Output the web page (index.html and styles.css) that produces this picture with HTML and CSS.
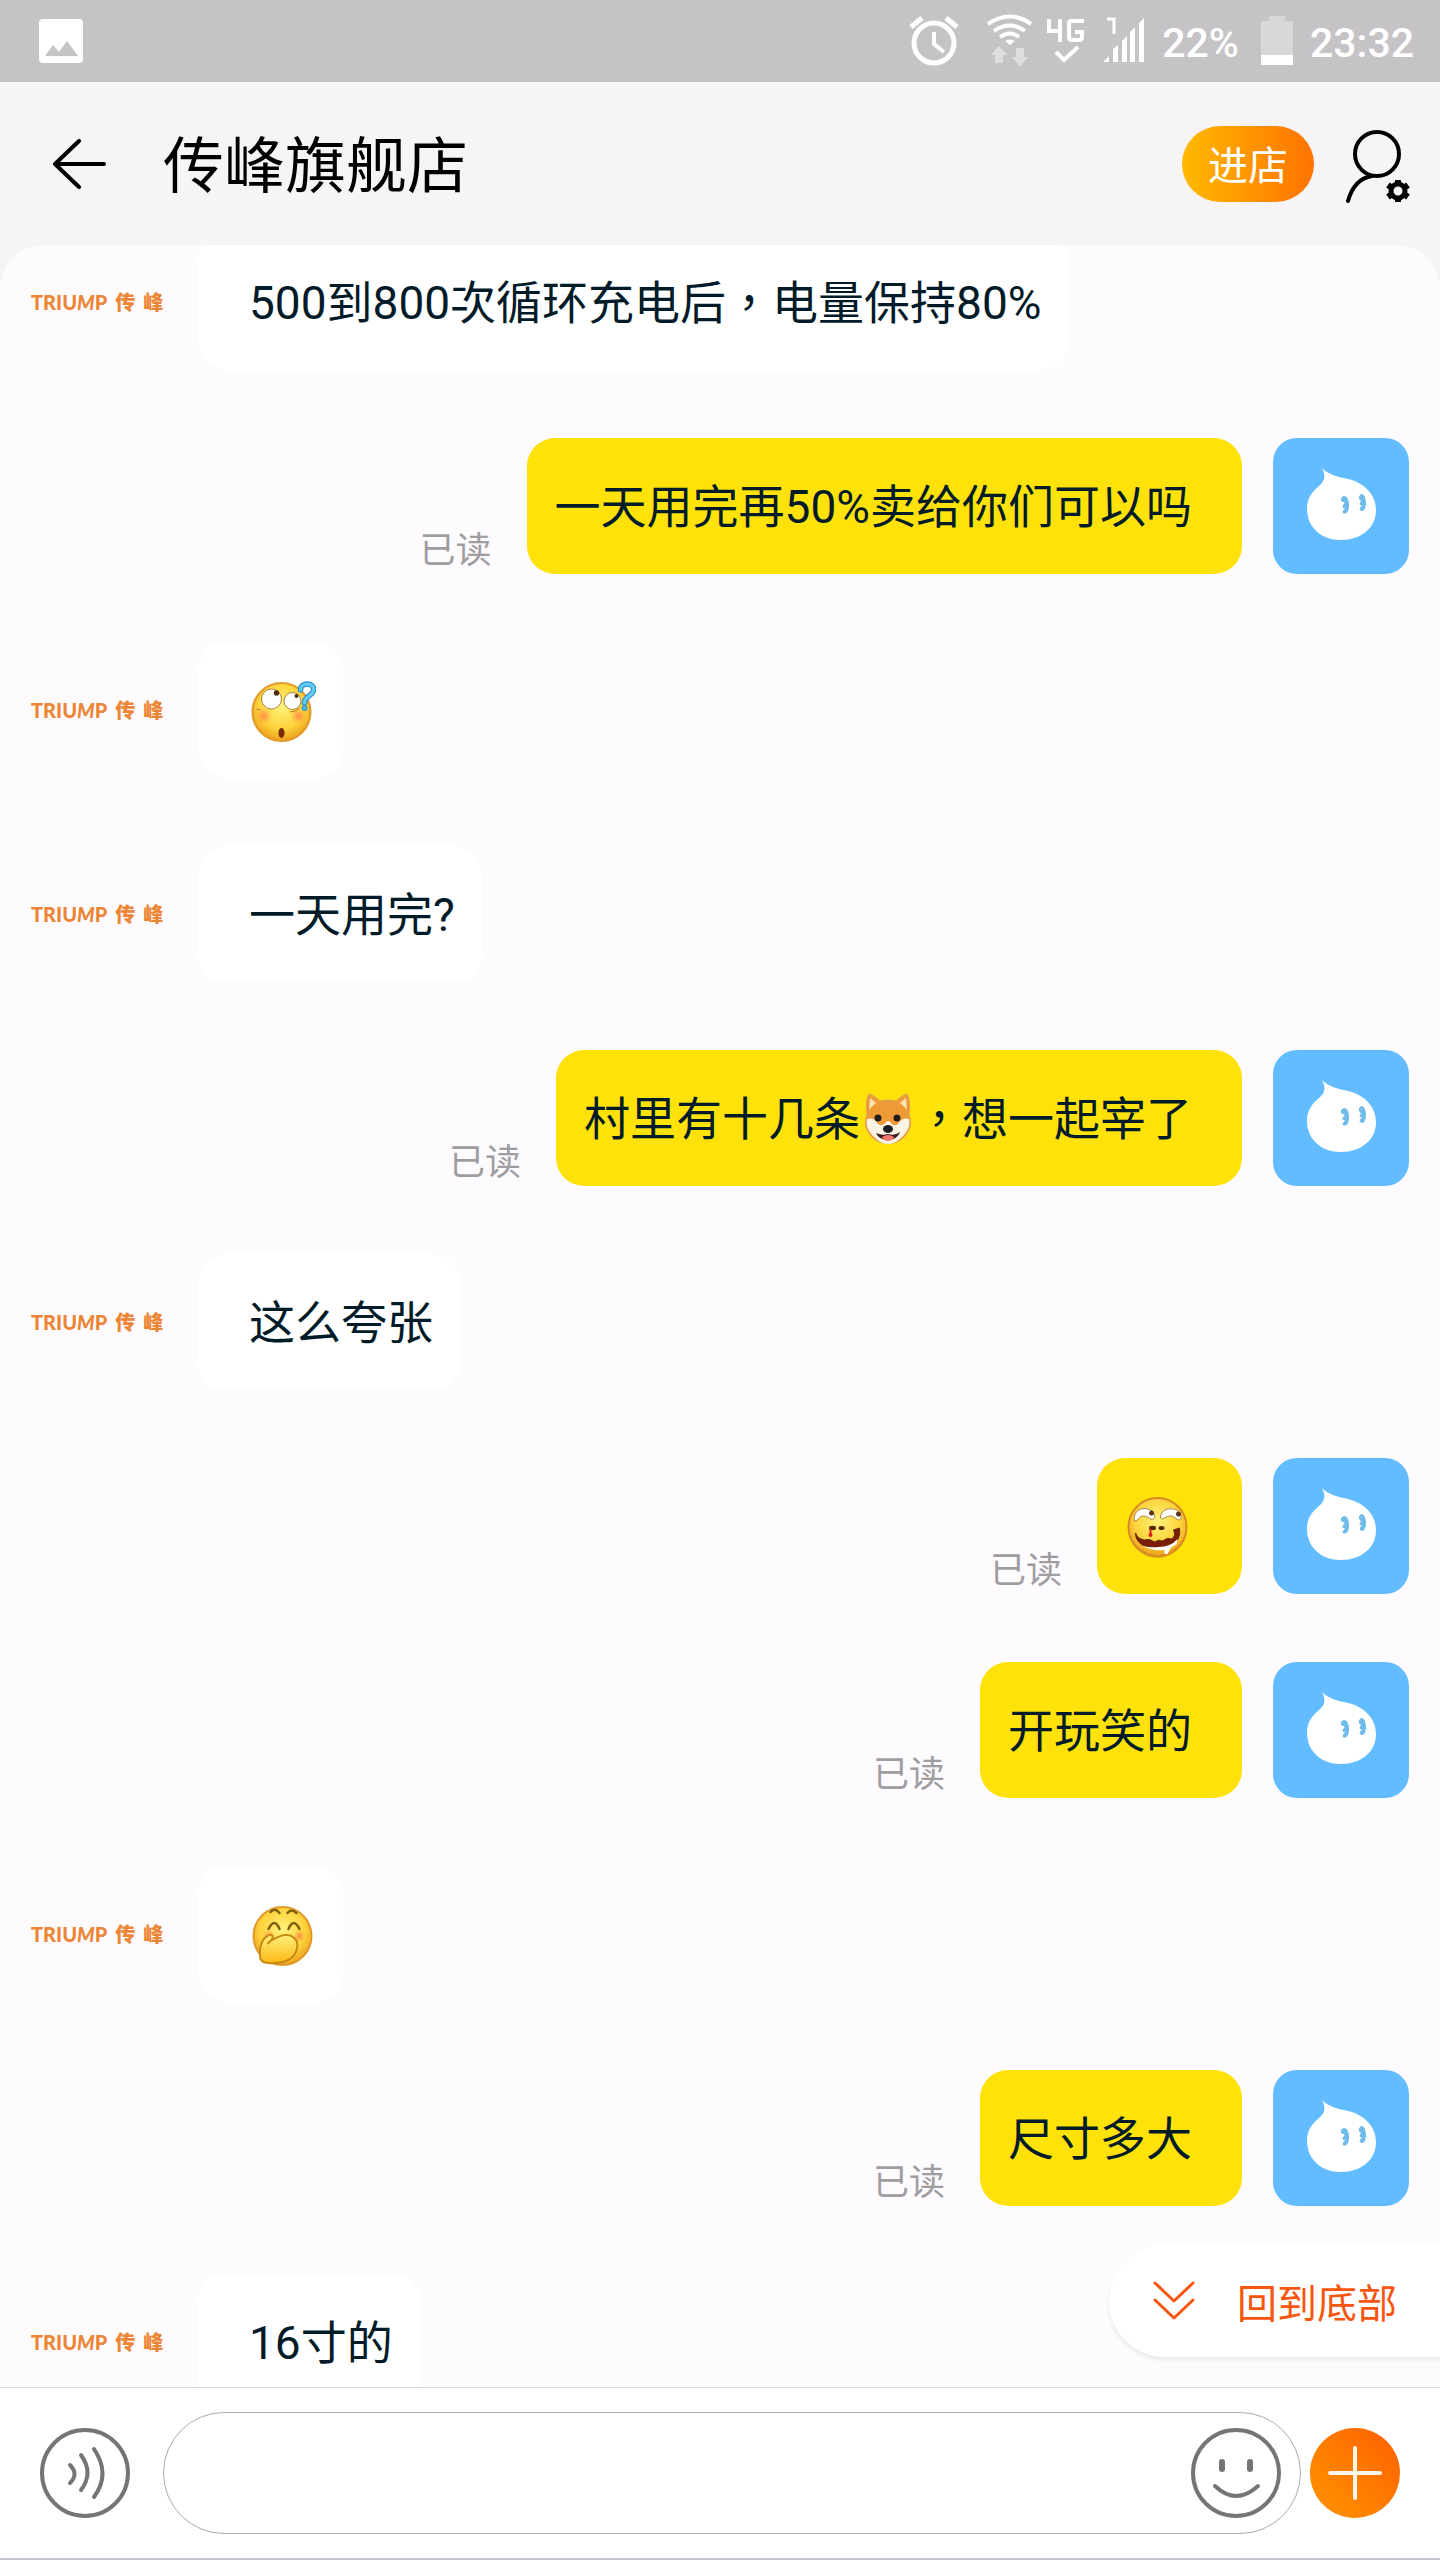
FILE: index.html
```html
<!DOCTYPE html>
<html lang="zh-Hant">
<head>
    <meta charset="UTF-8">
    <meta name="viewport" content="width=device-width, initial-scale=1.0">
    <title>传峰旗舰店</title>
    <link rel="stylesheet" href="styles.css">
</head>
<body>

    <!-- Shared drawings -->
    <svg class="sprite" aria-hidden="true">
        <defs>
            <radialGradient id="faceFill" cx="50%" cy="40%" r="60%">
                <stop offset="0" stop-color="#fff27a"/>
                <stop offset="0.65" stop-color="#fdd33c"/>
                <stop offset="1" stop-color="#eda01d"/>
            </radialGradient>
            <radialGradient id="blushFill">
                <stop offset="0" stop-color="#ff8a4a"/>
                <stop offset="1" stop-color="#ff9a3c" stop-opacity="0"/>
            </radialGradient>
            <linearGradient id="handFill" x1="0" y1="0" x2="0" y2="1">
                <stop offset="0" stop-color="#fff07c"/>
                <stop offset="1" stop-color="#fdb813"/>
            </linearGradient>
        </defs>
        <symbol id="drop" viewBox="0 0 136 136">
            <path fill="#fff" d="M49 30C56 37 66 39 75 41C92 45 103 57 103 72C103 90 88 102 68 102C48 102 34 89 34 71C34 60 39 54 46 48C52 43 53 38 49 30Z"/>
            <g fill="#6fbbea">
                <path d="M69 59C73 56 76 61 76 67C76 74 73 77 70 75C69 73 71 72 72 70C69 70 69 69 70 67C71 66 72 66 71 64C68 65 67 61 69 59Z"/>
                <path d="M87 57C90 54 93 59 93 65C93 71 90 75 87 72C86 70 88 69 89 67C87 68 86 66 87 65L88 63C86 62 85 59 87 57Z"/>
            </g>
        </symbol>
        <symbol id="faceDoubt" viewBox="0 0 66 66">
            <circle cx="32" cy="34" r="29" fill="url(#faceFill)" stroke="#e29a2b" stroke-width="2"/>
            <circle cx="14" cy="38" r="8" fill="url(#blushFill)"/>
            <circle cx="49" cy="38" r="8" fill="url(#blushFill)"/>
            <circle cx="22" cy="21" r="10" fill="#fff" stroke="#a98343"/>
            <circle cx="43" cy="23" r="8.500" fill="#fff" stroke="#a98343"/>
            <circle cx="27" cy="15" r="2.700" fill="#4c2c0d"/>
            <circle cx="47" cy="18" r="2" fill="#4c2c0d"/>
            <path d="M7 31l4 1M40 34q7 0 10-4" fill="none" stroke="#b97c20"/>
            <ellipse cx="32" cy="55" rx="3" ry="5" fill="#7a2c08"/>
            <path d="M51 12C51 4 65 4 64 12C64 18 55 17 55 25" fill="none" stroke="#2b93cf" stroke-width="5.500" stroke-linecap="round"/>
            <path d="M51 12C51 4 65 4 64 12C64 18 55 17 55 25" fill="none" stroke="#65cdf5" stroke-width="3" stroke-linecap="round"/>
            <circle cx="55" cy="30" r="2.600" fill="#48b4e8" stroke="#2b93cf"/>
        </symbol>
        <symbol id="faceWicked" viewBox="0 0 66 66">
            <circle cx="32" cy="35" r="29" fill="#8a6200" opacity="0.35"/>
            <circle cx="32" cy="33" r="29" fill="url(#faceFill)" stroke="#d98a22" stroke-width="2"/>
            <g fill="#fff" stroke="#a98343">
                <path d="M9 27C7 17 16 13 22 15C28 16 31 22 28 25C25 27 23 22 18 22C13 22 13 27 9 27Z"/>
                <path d="M35 24C35 16 42 14 48 15C54 16 57 22 55 25C52 28 50 22 45 22C40 22 37 27 35 24Z"/>
            </g>
            <circle cx="26" cy="19" r="2.500" fill="#573716"/>
            <circle cx="53" cy="20" r="2.500" fill="#573716"/>
            <ellipse cx="27" cy="34" rx="3.500" ry="2.200" fill="#5c2706"/>
            <ellipse cx="36" cy="34" rx="3" ry="2" fill="#5c2706"/>
            <path d="M25 35v6" stroke="#dd210c" stroke-width="2"/>
            <circle cx="25" cy="41" r="2" fill="#dd210c"/>
            <path d="M10 39Q12 45 19 46Q24 44 29 48Q33 45 37 47Q42 43 46 45Q51 42 48 36L54 34Q56 46 45 52Q31 57 19 52Q10 48 10 39Z" fill="#7c1d07" stroke="#5a2c06"/>
            <path d="M17 52Q26 54 33 53Q45 53 52 45L51 50L45 54L42 60H39V56Q27 57 17 52Z" fill="#fff"/>
        </symbol>
        <symbol id="faceGiggle" viewBox="0 0 66 66">
            <circle cx="33" cy="34" r="29" fill="url(#faceFill)" stroke="#e09a2a" stroke-width="2"/>
            <circle cx="50" cy="34" r="6" fill="url(#blushFill)"/>
            <circle cx="19" cy="34" r="6" fill="url(#blushFill)"/>
            <g fill="none" stroke="#80600f" stroke-width="2.500" stroke-linecap="round">
                <path d="M21 10q4-5 9 1M38 11q4-5 9 0M19 27q6-12 11 0M39 27q5-12 11 0"/>
            </g>
            <path d="M11 57C9 47 12 37 18 34C22 31 25 34 22 38C27 36 29 34 35 33C44 32 50 39 47 48C44 59 31 62 19 61C14 61 12 59 11 57Z" fill="url(#handFill)" stroke="#c98a13" stroke-width="2"/>
            <path d="M22 38l-4 4" stroke="#c98a13" stroke-width="2"/>
        </symbol>
        <symbol id="dog" viewBox="0 0 46 52">
            <path d="M4 1C1 5 1 16 2 22C-1 28 0 36 6 43C14 53 32 53 40 43C46 36 47 28 44 22C45 16 45 5 42 1C38 2 34 5 31 8Q23 6 15 8C12 5 8 2 4 1Z" fill="#ee9a36" stroke="#d9a45a"/>
            <path d="M5 5L4 17Q7 13 11 10ZM41 5L42 17Q39 13 35 10Z" fill="#fde3b4"/>
            <path d="M2 26Q9 24 13 31Q17 34 20 30Q23 26 26 30Q29 34 33 31Q37 24 44 26Q46 34 39 42Q31 51 23 51Q15 51 7 42Q0 34 2 26Z" fill="#fbf3e6"/>
            <circle cx="13" cy="25" r="3.500" fill="#221c1c"/>
            <circle cx="32" cy="25" r="3.500" fill="#221c1c"/>
            <path d="M11 40Q17 43 23 41Q30 43 35 39Q33 46 23 47Q14 47 11 40Z" fill="#3a1c18"/>
            <path d="M17 44Q23 40 29 44Q27 48 23 48Q19 48 17 44Z" fill="#f4736d"/>
            <ellipse cx="23" cy="36" rx="5" ry="4" fill="#1f1c1f"/>
        </symbol>
    </svg>

    <div class="app">
        <div class="status-bar">
            <svg class="status-photo" width="44" height="44" viewBox="0 0 44 44">
                <rect width="44" height="44" rx="4" fill="#fff"/>
                <path d="M6 37L14 26L20 33L28 22L39 37Z" fill="#c5c3c6"/>
            </svg>
            <svg class="status-icons" width="236" height="54" viewBox="908 14 236 54">
                <g fill="none" stroke="#fff">
                    <circle cx="934" cy="43" r="20" stroke-width="5"/>
                    <path d="M934 32V44L944 52" stroke-width="4"/>
                    <path d="M911 27L922 18M957 27L946 18" stroke-width="5"/>
                    <path d="M988 24Q1010 9 1031 24M994 31Q1010 20 1025 31M1000 37Q1010 30 1019 37" stroke-width="4"/>
                    <path d="M1049 19V31H1062M1060 19V42M1084 21H1071Q1069 21 1069 24V37Q1069 40 1072 40H1079Q1082 40 1082 37V32H1075" stroke-width="4"/>
                    <path d="M1056 52L1064 60L1078 47" stroke-width="4"/>
                    <path d="M1107 19H1114V34" stroke-width="3"/>
                </g>
                <path fill="#fff" d="M1005 41Q1010 38 1015 41L1010 45ZM1103 62L1109 56V62ZM1113 62V49L1118 45V62ZM1122 62V41L1127 36V62ZM1130 62V32L1135 27V62ZM1139 62V23L1144 18V62Z"/>
                <path fill="#dedede" d="M999 46L1007 55H1003V63H995V55H991ZM1016 48H1024V57H1028L1020 67L1012 57H1016Z"/>
            </svg>
            <span class="status-text">22%</span>
            <svg class="status-battery" width="32" height="50" viewBox="0 0 32 50">
                <path d="M8 0H24V5H32V39H0V5H8Z" fill="#d8d8d8"/>
                <path d="M0 39H32V49H0Z" fill="#fff"/>
            </svg>
            <span class="status-text">23:32</span>
        </div>

        <header class="header">
            <button class="icon-btn" type="button" aria-label="返回">
                <svg width="54" height="50" viewBox="0 0 54 50">
                    <path d="M26 2L2 25L26 48M2 25H51" fill="none" stroke="#000" stroke-width="4" stroke-linecap="round" stroke-linejoin="round"/>
                </svg>
            </button>
            <h1>传峰旗舰店</h1>
            <button class="enter-btn" type="button">进店</button>
            <button class="icon-btn" type="button" aria-label="设置">
                <svg width="66" height="78" viewBox="0 -4 66 78">
                    <g fill="none" stroke="#000" stroke-width="4" stroke-linecap="round">
                        <circle cx="33" cy="25" r="22"/>
                        <path d="M4 72Q10 50 28 47"/>
                    </g>
                    <circle cx="54" cy="62" r="7" fill="none" stroke="#000" stroke-width="5"/>
                    <path d="M54 51V55M54 69V73M44 56L48 59M64 56L60 59M44 68L48 65M64 68L60 65" stroke="#000" stroke-width="6"/>
                </svg>
            </button>
        </header>

        <main class="chat">
            <div class="messages">
                <div class="message">
                    <div class="avatar shop-logo">TRIU<i>M</i>P<b>传</b><b>峰</b></div>
                    <p class="bubble">500到800次循环充电后，电量保持80%</p>
                </div>
                <div class="message mine">
                    <svg class="avatar"><use href="#drop"/></svg>
                    <p class="bubble">一天用完再50%卖给你们可以吗</p>
                    <span class="read">已读</span>
                </div>
                <div class="message">
                    <div class="avatar shop-logo">TRIU<i>M</i>P<b>传</b><b>峰</b></div>
                    <p class="bubble"><svg class="emoji"><use href="#faceDoubt"/></svg></p>
                </div>
                <div class="message">
                    <div class="avatar shop-logo">TRIU<i>M</i>P<b>传</b><b>峰</b></div>
                    <p class="bubble">一天用完?</p>
                </div>
                <div class="message mine">
                    <svg class="avatar"><use href="#drop"/></svg>
                    <p class="bubble">村里有十几条<svg class="dog"><use href="#dog"/></svg>，想一起宰了</p>
                    <span class="read">已读</span>
                </div>
                <div class="message">
                    <div class="avatar shop-logo">TRIU<i>M</i>P<b>传</b><b>峰</b></div>
                    <p class="bubble">这么夸张</p>
                </div>
                <div class="message mine">
                    <svg class="avatar"><use href="#drop"/></svg>
                    <p class="bubble"><svg class="emoji"><use href="#faceWicked"/></svg></p>
                    <span class="read">已读</span>
                </div>
                <div class="message mine">
                    <svg class="avatar"><use href="#drop"/></svg>
                    <p class="bubble">开玩笑的</p>
                    <span class="read">已读</span>
                </div>
                <div class="message">
                    <div class="avatar shop-logo">TRIU<i>M</i>P<b>传</b><b>峰</b></div>
                    <p class="bubble"><svg class="emoji"><use href="#faceGiggle"/></svg></p>
                </div>
                <div class="message mine">
                    <svg class="avatar"><use href="#drop"/></svg>
                    <p class="bubble">尺寸多大</p>
                    <span class="read">已读</span>
                </div>
                <div class="message">
                    <div class="avatar shop-logo">TRIU<i>M</i>P<b>传</b><b>峰</b></div>
                    <p class="bubble">16寸的</p>
                </div>
            </div>

            <button class="to-bottom" type="button">
                <svg width="42" height="40" viewBox="0 0 42 40">
                    <path d="M2 2L21 20L40 2M2 19L21 37L40 19" fill="none" stroke="#f8560f" stroke-width="3" stroke-linecap="round" stroke-linejoin="round"/>
                </svg>
                回到底部
            </button>
        </main>

        <footer class="composer">
            <button class="icon-btn" type="button" aria-label="语音">
                <svg width="90" height="90" viewBox="0 0 90 90">
                    <g fill="none" stroke="#757575" stroke-width="4" stroke-linecap="round">
                        <circle cx="45" cy="45" r="43"/>
                        <path d="M30 37Q39 46 30 55M41 27Q54 45 41 62M54 21Q71 46 54 69"/>
                    </g>
                </svg>
            </button>
            <div class="input-box">
                <input type="text" aria-label="输入消息">
                <button class="icon-btn" type="button" aria-label="表情">
                    <svg width="90" height="90" viewBox="0 0 90 90">
                        <g fill="none" stroke="#757575" stroke-width="4" stroke-linecap="round">
                            <circle cx="45" cy="45" r="43"/>
                            <path d="M24 58Q45 78 67 58"/>
                            <path d="M31 34V41M59 34V41" stroke-width="6"/>
                        </g>
                    </svg>
                </button>
            </div>
            <button class="plus-btn" type="button" aria-label="更多">
                <svg width="54" height="54" viewBox="0 0 54 54">
                    <path d="M27 2V52M2 27H52" stroke="#fff6ec" stroke-width="4" stroke-linecap="round"/>
                </svg>
            </button>
        </footer>
    </div>

</body>
</html>
```

FILE: styles.css
```css
* {
    box-sizing: border-box;
}

body {
    margin: 0;
    font-family: Roboto, "Noto Sans CJK TC", sans-serif;
    background-color: #f7f4f7;
    color: #021b29;
}

button {
    border: none;
    padding: 0;
    font-family: inherit;
    cursor: pointer;
}

.sprite {
    position: absolute;
    width: 0;
    height: 0;
}

.app {
    display: flex;
    flex-direction: column;
    height: 100vh;
}

/* Status bar */
.status-bar {
    display: flex;
    align-items: center;
    height: 82px;
    padding: 0 26px 0 39px;
    background-color: #c5c3c6;
    color: #fff;
}

.status-photo {
    margin-right: auto;
}

.status-icons {
    margin-right: 18px;
}

.status-battery {
    margin: 0 17px 0 22px;
}

.status-text {
    padding-top: 4px;
    font-size: 41px;
    font-weight: 500;
    line-height: 48px;
}

/* Header */
.header {
    display: flex;
    align-items: center;
    height: 163px;
    padding: 0 30px 0 53px;
}

.header h1 {
    flex: 1;
    margin: 0 0 0 56px;
    padding-top: 6px;
    font-size: 61px;
    font-weight: 400;
    line-height: 84px;
    color: #000;
}

.icon-btn {
    display: flex;
    background: none;
}

.enter-btn {
    width: 132px;
    height: 76px;
    margin-right: 30px;
    padding-bottom: 2px;
    border-radius: 38px;
    background: linear-gradient(90deg, #ffb900, #ff7300);
    color: #fff;
    font-size: 40px;
}

/* Messages */
.chat {
    position: relative;
    flex: 1;
    min-height: 0;
    overflow: hidden;
    border-radius: 44px 44px 0 0;
    background-color: #fefbff;
}

.messages {
    display: flex;
    flex-direction: column;
    gap: 68px;
    margin-top: -11px;
    padding: 0 31px;
}

.message {
    display: flex;
    gap: 31px;
}

.message.mine {
    flex-direction: row-reverse;
}

.avatar {
    flex: none;
    width: 136px;
    height: 136px;
    border-radius: 24px;
}

.mine .avatar {
    background-color: #62bcff;
}

.shop-logo {
    display: flex;
    align-items: center;
    color: #ec8536;
    font-family: Lato, "Noto Sans CJK SC", sans-serif;
    font-size: 20px;
    font-weight: 900;
    line-height: 24px;
}

.shop-logo b {
    margin-left: 8px;
}

.bubble {
    display: flex;
    align-items: center;
    min-height: 136px;
    margin: 0;
    padding: 2px 27px 0 51px;
    border-radius: 28px;
    background-color: #fff;
    font-size: 46px;
    line-height: 60px;
}

.mine .bubble {
    padding: 2px 50px 0 28px;
    background-color: #ffe20a;
}

.emoji {
    width: 67px;
    height: 66px;
}

.dog {
    width: 46px;
    height: 52px;
    margin: 0 5px;
}

.read {
    align-self: flex-end;
    margin-right: 4px;
    line-height: 46px;
    font-size: 36px;
    color: #a09da1;
}

.to-bottom {
    position: absolute;
    right: 0;
    bottom: 30px;
    display: flex;
    align-items: center;
    gap: 42px;
    height: 112px;
    padding: 0 43px 0 44px;
    border-radius: 56px 0 0 56px;
    background-color: #fff;
    box-shadow: 0 3px 4px rgba(0, 0, 0, 0.08);
    color: #f8560f;
    font-size: 40px;
}

/* Composer */
.composer {
    display: flex;
    align-items: center;
    height: 173px;
    padding: 0 40px 0 40px;
    border-top: 1px solid #dcdce0;
    border-bottom: 2px solid #c5c5cf;
    background-color: #fff;
}

.input-box {
    display: flex;
    align-items: center;
    flex: 1;
    height: 122px;
    margin: 0 9px 0 33px;
    padding: 0 19px 0 50px;
    border: 1px solid #a9a9b3;
    border-radius: 61px;
}

.input-box input {
    flex: 1;
    min-width: 0;
    border: none;
    outline: none;
    background: none;
    font-family: inherit;
    font-size: 46px;
}

.plus-btn {
    display: flex;
    align-items: center;
    justify-content: center;
    width: 90px;
    height: 90px;
    border-radius: 50%;
    background: linear-gradient(45deg, #ff9500, #ff6000);
}
```
